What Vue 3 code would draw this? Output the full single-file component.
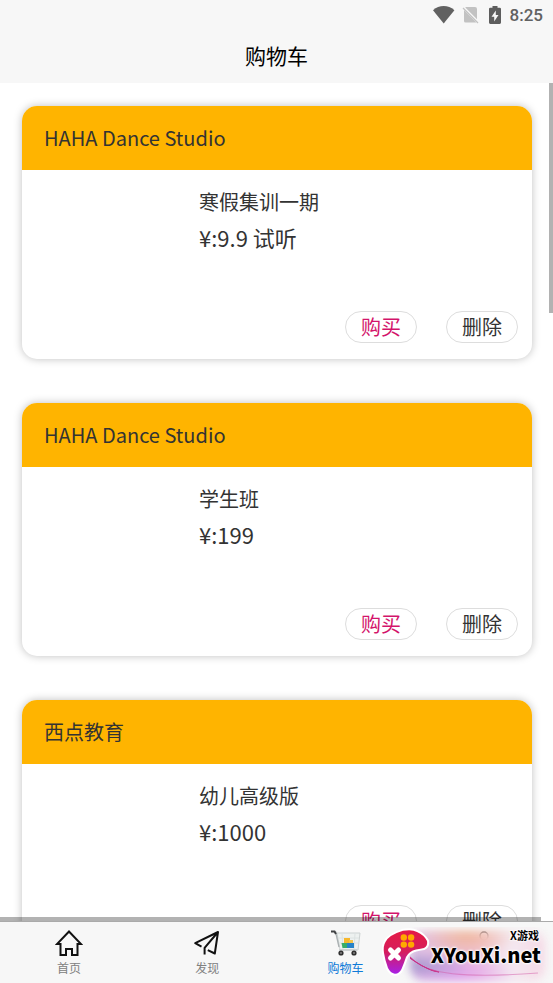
<script setup>
const courses = [
  { id: 1, shop: 'HAHA Dance Studio', name: '寒假集训一期', price: '9.9 试听' },
  { id: 2, shop: 'HAHA Dance Studio', name: '学生班', price: '199' },
  { id: 3, shop: '西点教育', name: '幼儿高级版', price: '1000' },
]
</script>

<template>
  <div class="screen">
    <header class="top">
      <div class="status">
        <svg class="wifi" width="22" height="18" viewBox="0 0 22 18" aria-hidden="true">
          <path d="M0 4.2Q4.8 0 10.7 0T21.4 4.2L10.7 17.6Z" fill="#616161" />
        </svg>
        <svg class="sim" width="17" height="18" viewBox="0 0 17 18" aria-hidden="true">
          <path d="M3.8 1H13Q15 1 15 3V13.2L3.3 1.5ZM2 4L14.2 16.3Q13.8 16.6 13 16.6H3.5Q2 16.6 2 15Z" fill="#c2c2c2" />
          <path d="M1 2L16 17" stroke="#c2c2c2" stroke-width="1.3" />
        </svg>
        <svg class="battery" width="12" height="18" viewBox="0 0 12 18" aria-hidden="true">
          <path d="M3.5 0H8.5V1.8H10.7Q12 1.8 12 3V16.6Q12 18 10.7 18H1.3Q0 18 0 16.6V3Q0 1.8 1.3 1.8H3.5Z" fill="#5d5d5d" />
          <path d="M6.8 4.5L2.5 10.8H5.2V15.5L9.5 9H6.8Z" fill="#f7f7f7" />
        </svg>
        <time>8:25</time>
      </div>
      <h1>购物车</h1>
    </header>

    <main class="cart">
      <article v-for="course in courses" :key="course.id" class="card">
        <h2>{{ course.shop }}</h2>
        <div class="detail">
          <p class="name">{{ course.name }}</p>
          <p class="price">¥:{{ course.price }}</p>
        </div>
        <div class="actions">
          <button type="button" class="buy">购买</button>
          <button type="button">删除</button>
        </div>
      </article>
      <div class="bar-v"></div>
      <div class="bar-h"></div>
    </main>

    <nav class="tabs">
      <a href="#home">
        <svg width="28" height="28" viewBox="0 0 28 28" fill="none" stroke="#111" stroke-width="2" aria-hidden="true">
          <path d="M14 2.5L2 15H5.5V26H11V20H17V26H22.5V15H26Z" />
        </svg>
        <span>首页</span>
      </a>
      <a href="#discover">
        <svg width="28" height="28" viewBox="0 0 28 28" fill="none" stroke="#111" stroke-width="2" stroke-linejoin="round" aria-hidden="true">
          <path d="M8.5 17.6L2.2 14.2L25 3L21.8 24.5L14.8 21.2M25 3L11.6 18.8V25.5" />
        </svg>
        <span>发现</span>
      </a>
      <a href="#cart" class="active">
        <svg width="30" height="28" viewBox="0 0 30 28" fill="none" aria-hidden="true">
          <path d="M6 4H29L27 21H9Z" fill="#edf1f0" stroke="#cdd3d3" />
          <path d="M11 5L12 20M24 5L23 20M7 9H28M8 14H27" stroke="#dce2e2" />
          <rect x="13" y="9" width="6" height="5" fill="#f6b72c" />
          <rect x="18" y="11" width="4" height="4" fill="#f3c449" />
          <path d="M10.5 14H17V19H11.5Z" fill="#37ad68" />
          <path d="M16 14H23V19H16Z" fill="#2683c8" />
          <path d="M4.5 2.5L8 18" stroke="#aab0b2" stroke-width="1.3" />
          <path d="M8 21H26" stroke="#c3c9cb" stroke-width="1.3" />
          <path d="M0 2.5H3.5L5 5" stroke="#3f4143" stroke-width="2" />
          <circle cx="10" cy="24" r="2.6" fill="#303030" />
          <circle cx="23" cy="24" r="2.6" fill="#303030" />
          <circle cx="10" cy="24" r="0.8" fill="#bbb" />
          <circle cx="23" cy="24" r="0.8" fill="#bbb" />
        </svg>
        <span>购物车</span>
      </a>
      <a href="#mine" aria-label="我的">
        <svg width="28" height="28" viewBox="0 0 28 28" fill="none" stroke="#555" stroke-width="1.5" aria-hidden="true">
          <circle cx="14" cy="7" r="4" />
        </svg>
      </a>
    </nav>

    <aside class="brand">
      <div class="glow"></div>
      <svg class="swoosh" width="140" height="34" viewBox="0 0 140 34" fill="none" aria-hidden="true">
        <path d="M-2 0Q10 13 29 17Q20 17 -2 2Z" fill="#c92f86" stroke="#c92f86" />
        <path d="M20 14Q48 24 128 18" stroke="#d45ca8" stroke-width="1.2" opacity=".5" />
      </svg>
      <svg class="pad" width="48" height="50" viewBox="0 0 48 50" aria-hidden="true">
        <defs>
          <linearGradient id="pad-fill" x1="0" y1="0" x2="0" y2="1">
            <stop offset="0" stop-color="#e51b45" />
            <stop offset=".5" stop-color="#d51d5d" />
            <stop offset="1" stop-color="#a820e5" />
          </linearGradient>
        </defs>
        <path d="M21 2.8Q30 1 35 4Q42 7 45 13Q46 18 42 20Q39 20.5 34 21.5Q27 23 24 29Q22 35 19.5 41Q17 46 12.7 45.7Q8.5 45 6 40Q3 32 2 25Q1 18 3.5 14Q7 7 21 2.8Z" fill="url(#pad-fill)" stroke="#fff" stroke-width="4" paint-order="stroke" />
        <g fill="#ffa800">
          <circle cx="21.8" cy="9.5" r="3.2" /><circle cx="29.1" cy="9.5" r="3.2" />
          <circle cx="21.8" cy="16.6" r="3.2" /><circle cx="29.1" cy="16.6" r="3.2" />
        </g>
        <path d="M8.5 22L16.5 30M16.5 22L8.5 30" stroke="#fff" stroke-width="5" stroke-linecap="round" />
      </svg>
      <div class="brand-text">
        <span>X游戏</span>
        <strong>XYouXi.net</strong>
      </div>
    </aside>
  </div>
</template>

<style>
body {
  margin: 0;
  background: #fff;
}
</style>

<style scoped>
.screen {
  position: relative;
  display: flex;
  flex-direction: column;
  height: 100vh;
  overflow: hidden;
  color: #333;
  font-family: "Noto Sans CJK SC", sans-serif;
}
.top {
  flex: none;
  background: #f7f7f7;
}
.status {
  display: flex;
  align-items: center;
  justify-content: flex-end;
  height: 30px;
  padding-right: 10px;
  color: #616161;
  font: 500 17px/30px Roboto, sans-serif;
}
.sim {
  margin-left: 7px;
}
.battery {
  margin: 0 9px 0 10px;
}
h1 {
  margin: 0;
  padding-bottom: 3px;
  color: #000;
  font-size: 21px;
  font-weight: 400;
  line-height: 50px;
  text-align: center;
}
.cart {
  position: relative;
  flex: 1;
  display: flex;
  flex-direction: column;
  gap: 44px;
  min-height: 0;
  padding: 23px 21px 0 22px;
  overflow: hidden;
}
.card {
  flex: none;
  display: flex;
  flex-direction: column;
  border-radius: 15px;
  background: #fff;
  box-shadow: 0 0 8px rgba(0, 0, 0, 0.25);
  overflow: hidden;
}
h2 {
  margin: 0;
  padding-left: 22px;
  background: #ffb400;
  font-size: 20px;
  font-weight: 400;
  line-height: 64px;
}
.detail {
  padding: 14px 16px 0 177px;
}
.name,
.price {
  margin: 0;
}
.name {
  font-size: 20px;
  line-height: 36px;
}
.price {
  font-size: 22px;
  line-height: 34px;
}
.actions {
  display: flex;
  justify-content: flex-end;
  gap: 29px;
  padding: 57px 14px 16px;
}
button {
  width: 72px;
  height: 32px;
  padding: 0;
  border: 1px solid #ddd;
  border-radius: 16px;
  background: #fff;
  color: #333;
  font-family: inherit;
  font-size: 20px;
  line-height: 30px;
}
.buy {
  color: #d3146b;
}
.bar-v,
.bar-h {
  position: absolute;
  background: rgba(0, 0, 0, 0.3);
}
.bar-v {
  top: 0;
  right: 0;
  width: 4px;
  height: 230px;
}
.bar-h {
  bottom: 0;
  left: 0;
  right: 12px;
  height: 4px;
}
.tabs {
  flex: none;
  display: grid;
  grid-template-columns: repeat(4, 1fr);
  height: 61px;
  border-top: 1px solid #aaa;
  background: #f7f7f7;
}
.tabs a {
  display: flex;
  flex-direction: column;
  align-items: center;
  padding-top: 7px;
  color: #808080;
  font-size: 12px;
  line-height: 22px;
  text-decoration: none;
}
.tabs .active {
  color: #0f7ad8;
}
.brand {
  position: absolute;
  right: 0;
  bottom: 0;
  width: 173px;
  height: 56px;
  overflow: hidden;
}
.glow {
  position: absolute;
  inset: 4px 8px 2px 30px;
  border-radius: 14px;
  background:
    radial-gradient(ellipse at 42% 0, rgba(240, 175, 130, 0.8), transparent 45%),
    radial-gradient(ellipse at 5% 70%, rgba(130, 130, 190, 0.6), transparent 30%),
    radial-gradient(ellipse at 35% 100%, rgba(213, 130, 240, 0.6), transparent 50%),
    linear-gradient(90deg, #dfc0e4, #f0c9e3 50%, #f4e9f1 75%, #f5d8e5);
  filter: blur(4px);
}
.swoosh {
  position: absolute;
  left: 30px;
  top: 28px;
}
.pad {
  position: absolute;
  left: 2px;
  top: 1px;
}
.brand-text {
  position: relative;
  display: flex;
  flex-direction: column;
  align-items: flex-end;
  padding-right: 12px;
  color: #000;
  font-weight: 700;
  text-shadow: 0 0 2px #fff, 0 0 2px #fff, 0 0 3px #fff, 0 0 3px #fff;
  white-space: nowrap;
}
.brand-text span {
  padding-right: 2px;
  font-size: 11px;
  line-height: 16px;
}
.brand-text strong {
  font-size: 20px;
  line-height: 24px;
}
</style>
